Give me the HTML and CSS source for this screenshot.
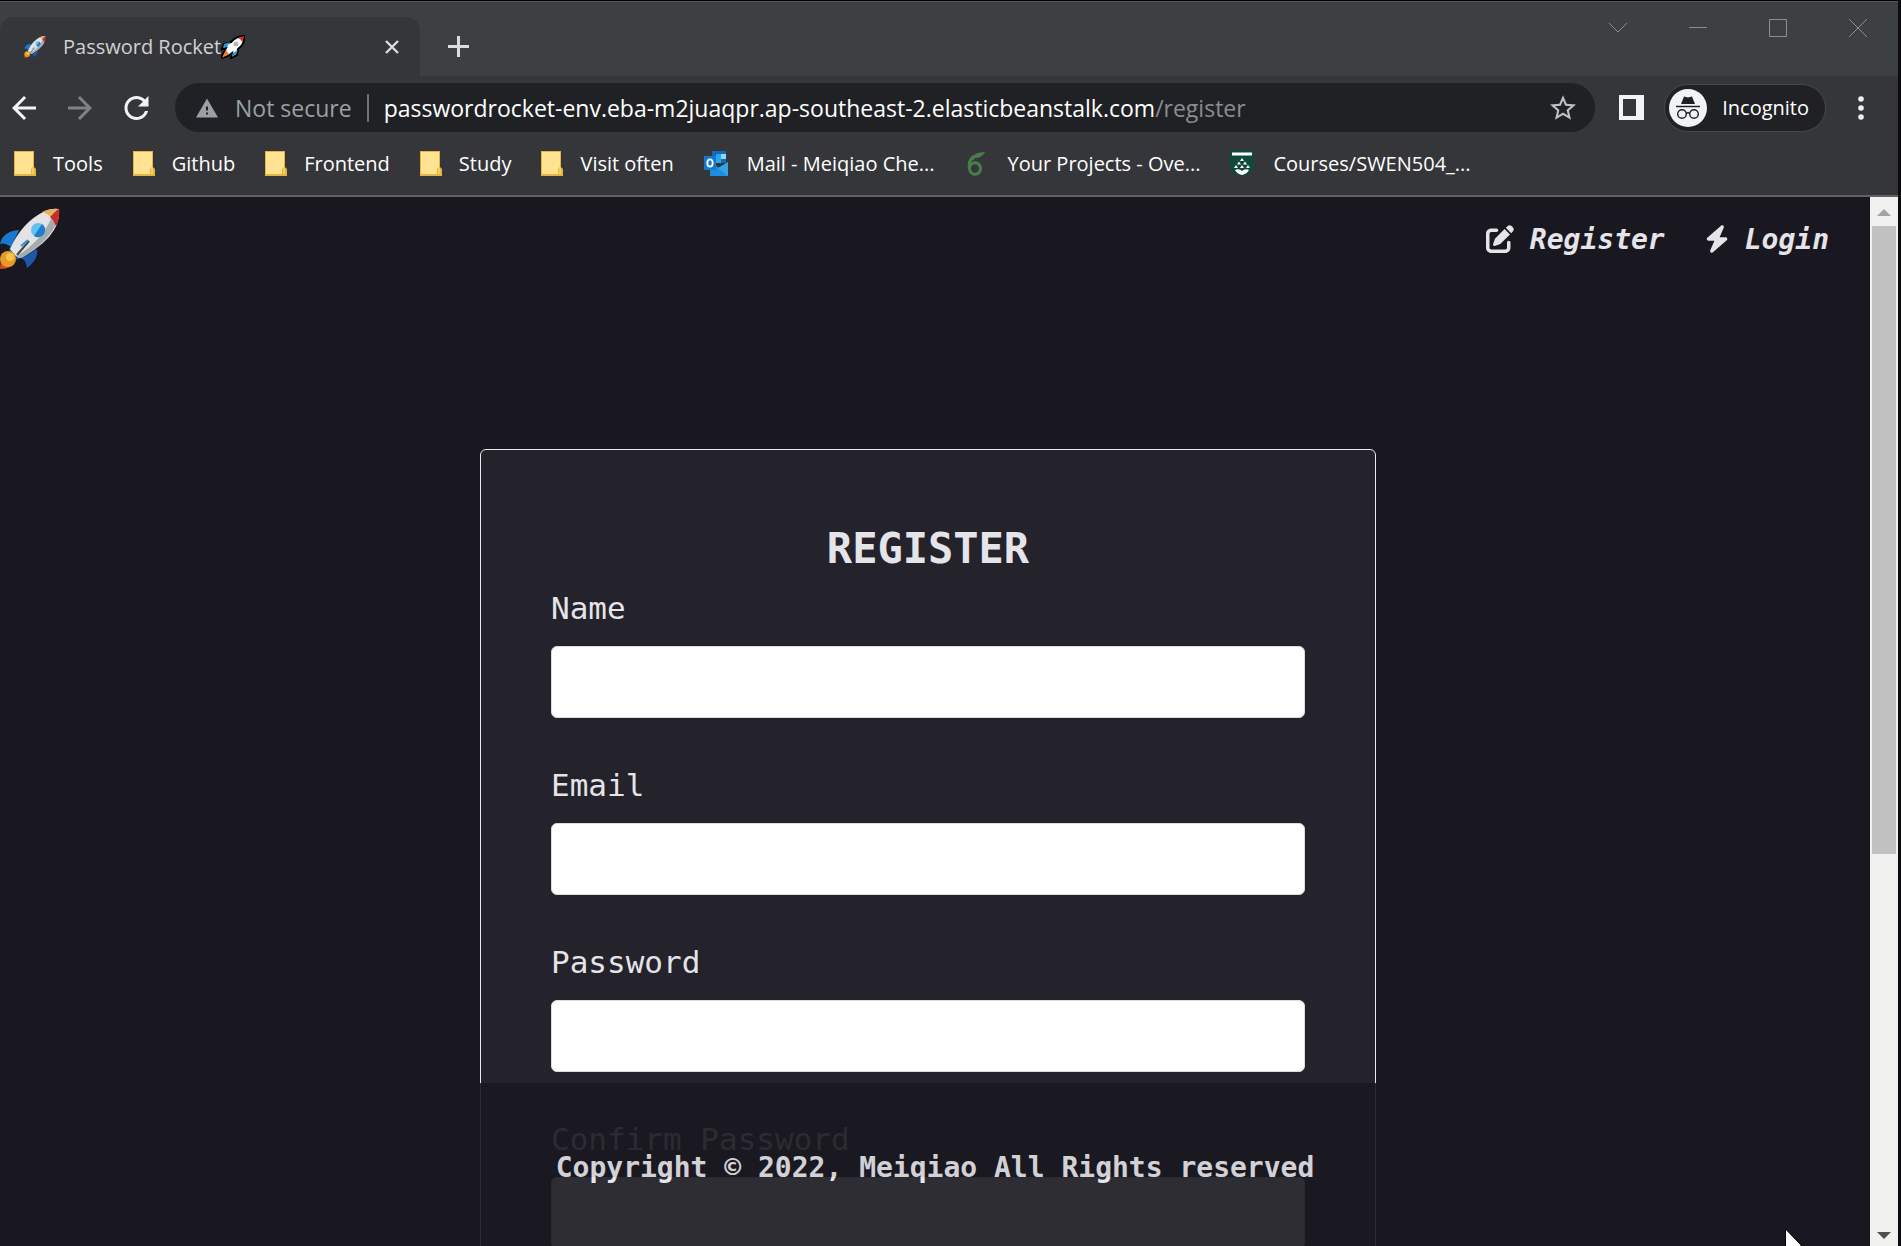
FILE: index.html
```html
<!DOCTYPE html>
<html lang="en">
<head>
<meta charset="utf-8">
<title>Password Rocket</title>
<link rel="stylesheet" href="styles.css">
</head>
<body>
<svg class="defs" aria-hidden="true">
  <symbol id="rocket" viewBox="0 0 60 62">
    <path d="M0 36C2 28 7 23 19 22L11 39Q5 34 0 36Z" fill="#1b78cf"/>
    <path d="M21 50L37 41Q39 51 27 60Q26 52 21 50Z" fill="#1c57a8"/>
    <path d="M10 38L22 49L17 52L9 43Z" fill="#1559a6"/>
    <path d="M45 3Q53 0 59 1Q60 12 54 22Q46 36 21 50Q17 50 13 45L10 41Q22 14 45 3Z" fill="#e3e3e6"/>
    <path d="M56 16Q48 34 21 50L17 48Q40 34 51 11Z" fill="#a6abad"/>
    <path d="M42 4Q51 0 58 1L51 9Q47 5 42 4Z" fill="#e8b35f"/>
    <path d="M58 1L50 9Q54 13 56 18Q60 10 59 2Z" fill="#c42e2c"/>
    <circle cx="38" cy="22" r="7" fill="#64c0ef"/>
    <path d="M42 16A7 7 0 0 1 34 28Z" fill="#1d80cd"/>
    <path d="M29 33L17 47" stroke="#3e454c" stroke-width="2"/>
    <path d="M28 32L21 38" stroke="#3694d8" stroke-width="2"/>
    <path d="M1 49L0 61Q12 61 15 54Z" fill="#da4a20"/>
    <circle cx="8" cy="51" r="8" fill="#e89a28"/>
    <circle cx="10" cy="49" r="4" fill="#f7c548"/>
  </symbol>
  <symbol id="folder" viewBox="0 0 22 25">
    <path d="M0 0H20V16L22 18V25H0Z" fill="#e4b545"/>
    <path d="M1 1H19V16L17 18V23H1Z" fill="#ffe391"/>
    <path d="M18 18Q18 16 20 17V23H18Z" fill="#f8ce5b"/>
  </symbol>
</svg>

<div class="window">
  <header class="chrome">
    <div class="tabstrip">
      <div class="tab">
        <svg class="favicon"><use href="#rocket"/></svg>
        <span class="tab-title">Password Rocket</span>
        <svg class="title-rocket" viewBox="0 0 24 24">
          <path d="M23 1Q15 1 10 7L3 9L1 14L5 13L3 17L0 23L7 21L11 18L10 23L16 20L17 14Q24 9 23 1Z" fill="#fff" stroke="#000" stroke-width="2"/>
          <path d="M9 7L3 9L2 13L6 12ZM12 18L11 22L15 19L17 15Z" fill="#1f9de0"/>
          <path d="M23 1L17 3Q20 4 21 7Q23 4 23 1Z" fill="#d62b2b"/>
          <path d="M5 15L1 23L8 19Z" fill="#f17f2d"/>
          <circle cx="15" cy="9" r="2.5" fill="#b5babd"/>
        </svg>
        <button class="tab-close" aria-label="Close tab"><svg width="14" height="14" viewBox="0 0 14 14"><path d="M1 1L13 13M13 1L1 13" stroke="#dadce0" stroke-width="2.4"/></svg></button>
      </div>
      <button class="new-tab" aria-label="New tab"><svg width="21" height="21" viewBox="0 0 21 21"><path d="M10.5 0V21M0 10.5H21" stroke="#dadce0" stroke-width="3"/></svg></button>
      <div class="window-buttons">
        <button aria-label="Search tabs"><svg width="18" height="18" viewBox="0 0 18 18"><path d="M0 4L9 13L18 4"/></svg></button>
        <button aria-label="Minimize"><svg width="18" height="18" viewBox="0 0 18 18"><path d="M0 8.5H18"/></svg></button>
        <button aria-label="Maximize"><svg width="18" height="18" viewBox="0 0 18 18"><path d="M.5.5H17.5V17.5H.5Z"/></svg></button>
        <button aria-label="Close window"><svg width="18" height="18" viewBox="0 0 18 18"><path d="M0 0L18 18M18 0L0 18"/></svg></button>
      </div>
    </div>

    <div class="toolbar">
      <button aria-label="Back"><svg width="24" height="24" viewBox="4 4 16 16"><path fill="#f1f3f4" d="M20 11H7.83l5.59-5.59L12 4l-8 8 8 8 1.41-1.41L7.83 13H20v-2z"/></svg></button>
      <button aria-label="Forward"><svg width="24" height="24" viewBox="4 4 16 16"><path fill="#7f8285" d="M4 13h12.17l-5.59 5.59L12 20l8-8-8-8-1.41 1.41L16.17 11H4v2z"/></svg></button>
      <button aria-label="Reload"><svg width="25" height="24" viewBox="4 4 16 16"><path fill="#f1f3f4" d="M17.65 6.35C16.2 4.9 14.21 4 12 4c-4.42 0-7.99 3.58-7.99 8s3.57 8 7.99 8c3.73 0 6.84-2.55 7.73-6h-2.08c-.82 2.33-3.04 4-5.65 4-3.31 0-6-2.69-6-6s2.69-6 6-6c1.66 0 3.14.69 4.22 1.78L13 11h7V4l-2.35 2.35z"/></svg></button>
      <div class="omnibox">
        <svg width="22" height="20" viewBox="1 2 22 19"><path fill="#9aa0a6" d="M1 21h22L12 2 1 21zm12-3h-2v-2h2v2zm0-4h-2v-4h2v4z"/></svg>
        <span class="not-secure">Not secure</span>
        <span class="divider"></span>
        <div class="url" role="textbox" aria-label="Address">passwordrocket-env.eba-m2juaqpr.ap-southeast-2.elasticbeanstalk.com<span class="url-path">/register</span></div>
        <button aria-label="Bookmark this page"><svg width="26" height="25" viewBox="2 2 20 19"><path fill="#bdc1c6" d="M22 9.24l-7.19-.62L12 2 9.19 8.63 2 9.24l5.46 4.73L5.82 21 12 17.27 18.18 21l-1.63-7.03L22 9.24zM12 15.4l-3.76 2.27 1-4.28-3.32-2.88 4.38-.38L12 6.1l1.71 4.04 4.38.38-3.32 2.88 1 4.28L12 15.4z"/></svg></button>
      </div>
      <button class="side-panel" aria-label="Side panel"><svg width="25" height="25" viewBox="0 0 25 25"><path fill="#f1f3f4" fill-rule="evenodd" d="M0 0H25V25H0ZM4 4V21H17V4Z"/></svg></button>
      <button class="incognito">
        <svg width="38" height="38" viewBox="0 0 38 38"><circle cx="19" cy="19" r="19" fill="#f1f3f4"/><path d="M12 15L15 7.5L19 8.5L23 7.5L26 15Z" fill="#202124"/><path d="M7 17.5H31" stroke="#202124" stroke-width="1.5"/><g fill="none" stroke="#202124" stroke-width="1.4"><circle cx="13" cy="25" r="4.3"/><circle cx="25" cy="25" r="4.3"/><path d="M17 24.5Q19 23 21 24.5"/></g></svg>
        Incognito
      </button>
      <button class="menu" aria-label="Menu"><svg width="6" height="24" viewBox="0 0 6 24" fill="#f1f3f4"><circle cx="3" cy="3" r="2.8"/><circle cx="3" cy="12" r="2.8"/><circle cx="3" cy="21" r="2.8"/></svg></button>
    </div>

    <nav class="bookmarks" aria-label="Bookmarks">
      <a href="#"><svg class="folder"><use href="#folder"/></svg>Tools</a>
      <a href="#"><svg class="folder"><use href="#folder"/></svg>Github</a>
      <a href="#"><svg class="folder"><use href="#folder"/></svg>Frontend</a>
      <a href="#"><svg class="folder"><use href="#folder"/></svg>Study</a>
      <a href="#"><svg class="folder"><use href="#folder"/></svg>Visit often</a>
      <a href="#" class="site"><svg width="24" height="25" viewBox="0 0 24 25"><path fill="#1469b8" d="M8 0H22V12H8Z"/><path fill="#28a8ea" d="M12 3H17V12H12Z"/><path fill="#8ed8fa" d="M17 3H22V8H17Z"/><path fill="#1b8fdd" d="M6 10L15 17L24 11V25H6Z"/><path fill="#2fa5e6" d="M24 11V25L14 17Z"/><path fill="#1478cf" d="M0 5H12V19H0Z"/><ellipse cx="6" cy="12" rx="2.7" ry="3.6" fill="none" stroke="#fff" stroke-width="1.8"/></svg>Mail - Meiqiao Che...</a>
      <a href="#" class="site"><svg width="24" height="25" viewBox="0 0 24 25"><g fill="none" stroke="#4a7d49" stroke-width="3"><ellipse cx="10" cy="17.5" rx="5.5" ry="5.8"/><path d="M4.5 18Q3 9 9 5"/></g><path fill="#4a7d49" d="M7 7Q9 1 20 1Q17 7 10 7L8 10Z"/></svg>Your Projects - Ove...</a>
      <a href="#" class="site"><svg width="24" height="27" viewBox="0 0 24 27"><path fill="#12483a" d="M0 0H24V18Q22 24 12 27Q2 24 0 18Z"/><path fill="#fff" d="M2 2.5H22V5.5H2ZM5 20Q9 18 12 21Q15 18 19 20Q17 24 12 25Q7 24 5 20ZM10 11L12 8L14 11ZM7 14.5L9 11.5L11 14.5ZM13 14.5L15 11.5L17 14.5ZM4 18L6 15L8 18ZM10 18L12 15L14 18ZM16 18L18 15L20 18Z"/></svg>Courses/SWEN504_...</a>
    </nav>
  </header>

  <div class="viewport">
    <div class="page">
      <div class="topbar">
        <a href="#" class="logo" aria-label="Home"><svg><use href="#rocket"/></svg></a>
        <nav class="site-nav" aria-label="Main">
          <a href="#"><svg width="28" height="28" viewBox="0 0 512 512" fill="currentColor"><path d="M471.6 21.7c-21.9-21.9-57.3-21.9-79.2 0L362.3 51.7l97.9 97.9 30.1-30.1c21.9-21.9 21.9-57.3 0-79.2L471.6 21.7zm-299.2 220c-6.1 6.1-10.8 13.6-13.5 21.9l-29.6 88.8c-2.9 8.6-.6 18.1 5.8 24.6s15.9 8.7 24.6 5.8l88.8-29.6c8.2-2.7 15.7-7.4 21.9-13.5L437.7 172.3 339.7 74.3 172.4 241.7zM96 64C43 64 0 107 0 160V416c0 53 43 96 96 96H352c53 0 96-43 96-96V320c0-17.7-14.3-32-32-32s-32 14.3-32 32v96c0 17.7-14.3 32-32 32H96c-17.7 0-32-14.3-32-32V160c0-17.7 14.3-32 32-32h96c17.7 0 32-14.3 32-32s-14.3-32-32-32H96z"/></svg>Register</a>
          <a href="#"><svg width="24" height="28" viewBox="0 0 448 512" fill="currentColor"><path d="M349.4 44.6c5.9-13.7 1.5-29.7-10.6-38.5s-28.6-8-39.9 1.8l-256 224c-10 8.8-13.6 22.9-8.9 35.3S50.7 288 64 288H175.5L98.6 467.4c-5.9 13.7-1.5 29.7 10.6 38.5s28.6 8 39.9-1.8l256-224c10-8.8 13.6-22.9 8.9-35.3s-16.6-20.7-30-20.7H272.5L349.4 44.6z"/></svg>Login</a>
        </nav>
      </div>

      <main class="content">
        <form class="card">
          <h1>REGISTER</h1>
          <div class="field"><label for="name">Name</label><input id="name" type="text"></div>
          <div class="field"><label for="email">Email</label><input id="email" type="email"></div>
          <div class="field"><label for="password">Password</label><input id="password" type="password"></div>
          <div class="field"><label for="confirm">Confirm Password</label><input id="confirm" type="password"></div>
        </form>
      </main>

      <footer class="footer">Copyright © 2022, Meiqiao All Rights reserved</footer>
      <svg class="cursor" width="16" height="17" viewBox="0 0 16 17"><path d="M.5 0L16 16V24H.5Z" fill="#fff" stroke="#000"/></svg>
    </div>
    <div class="scrollbar" aria-hidden="true">
      <svg width="14" height="8" viewBox="0 0 14 8"><path d="M0 7L7 0L14 7Z" fill="#a3a3a8"/></svg>
      <div class="track"><div class="thumb"></div></div>
      <svg width="14" height="8" viewBox="0 0 14 8"><path d="M0 0H14L7 7Z" fill="#505050"/></svg>
    </div>
  </div>
</div>
</body>
</html>
```
FILE: styles.css
```css
* { box-sizing: border-box; }

body {
  margin: 0;
  height: 100vh;
  overflow: hidden;
  background: #0c0c0e;
  font-family: "Open Sans", "Noto Sans", sans-serif;
}

button {
  display: flex;
  align-items: center;
  justify-content: center;
  padding: 0;
  border: 0;
  background: none;
  font: inherit;
  color: inherit;
}

svg { display: block; flex: none; }
a { color: inherit; text-decoration: none; }
.defs { position: absolute; width: 0; height: 0; }

.window {
  display: flex;
  flex-direction: column;
  height: 100vh;
  margin-right: 3px;
  border-top: 1px solid #000;
}

/* Browser frame */
.chrome {
  flex: none;
  background: #35363a;
  border-bottom: 2px solid #5f6164;
  color: #fff;
}

.tabstrip {
  display: flex;
  height: 75px;
  background: #3c4043;
  border-top: 1px solid #55565a;
}

.tab {
  display: flex;
  align-items: center;
  width: 420px;
  margin-top: 15px;
  padding: 0 21px 0 24px;
  background: #35363a;
  border-radius: 14px 14px 0 0;
  color: #cfd1d4;
  font-size: 20px;
}

.favicon { width: 22px; height: 22px; margin-right: 17px; }
.title-rocket { width: 24px; height: 24px; }
.tab-close { margin-left: auto; }
.new-tab { margin: 15px 0 0 28px; }

.window-buttons { display: flex; height: 52px; margin-left: auto; }
.window-buttons button { width: 80px; }
.window-buttons path { fill: none; stroke: #8c8e90; }

.toolbar {
  display: flex;
  align-items: center;
  gap: 32px;
  padding: 7px 34px 0 12px;
}

.omnibox {
  display: flex;
  flex: 1;
  align-items: center;
  height: 49px;
  margin: 0 -8px 0 -6px;
  padding: 0 19px 0 21px;
  border-radius: 25px;
  background: #202124;
  font-size: 23px;
  line-height: 30px;
  white-space: nowrap;
}

.not-secure { margin: 0 15px 0 17px; color: #9aa0a6; }
.divider { width: 2px; height: 28px; margin-right: 15px; background: #6f7275; }
.url { flex: 1; }
.url-path { color: #8a8d91; }

.incognito {
  gap: 15px;
  height: 48px;
  margin-left: -12px;
  padding: 0 16px 0 4px;
  border: 1px solid #46474b;
  border-radius: 24px;
  background: #202124;
  font-size: 20px;
}

.bookmarks {
  display: flex;
  gap: 30px;
  height: 63px;
  padding: 0 14px;
  font-size: 20px;
  white-space: nowrap;
}

.bookmarks a { display: flex; align-items: center; gap: 17px; }
.bookmarks .site { gap: 19px; }
.folder { width: 22px; height: 25px; }

/* Web page */
.viewport { display: flex; flex: 1; min-height: 0; }

.page {
  position: relative;
  flex: 1;
  min-width: 0;
  overflow: hidden;
  background: #19171f;
  color: #e5e4e9;
  font-family: "DejaVu Sans Mono", monospace;
}

.topbar {
  display: flex;
  align-items: center;
  justify-content: space-between;
  padding: 11px 41px 0 0;
}

.logo svg { width: 60px; height: 62px; }

.site-nav {
  display: flex;
  gap: 40px;
  font-size: 28px;
  font-style: italic;
  font-weight: 700;
}

.site-nav a { display: flex; align-items: center; gap: 16px; }

.content { padding: 179px 14px 0 0; }

.card {
  max-width: 896px;
  margin: 0 auto;
  padding: 72px 70px;
  border: 1px solid #e9e9ec;
  border-radius: 6px;
  background: #24222b;
}

.card h1 {
  margin: 0;
  font-size: 42px;
  line-height: 54px;
  text-align: center;
}

.field { margin-bottom: 35px; }

.field label {
  display: block;
  margin-bottom: 6px;
  font-size: 31px;
  line-height: 64px;
}

.field input {
  display: block;
  width: 100%;
  height: 72px;
  padding: 0 20px;
  border: 1px solid #dcdce0;
  border-radius: 6px;
  background: #fff;
  font: inherit;
  font-size: 31px;
}

.footer {
  position: absolute;
  right: 0;
  bottom: 0;
  left: 0;
  padding: 65px 0 58px;
  background: #19171f;
  font-size: 28px;
  font-weight: 700;
  line-height: 40px;
  text-align: center;
  opacity: 0.9;
}

.cursor { position: absolute; right: 69px; bottom: 0; }

.scrollbar {
  display: flex;
  flex: none;
  flex-direction: column;
  align-items: center;
  gap: 9px;
  width: 28px;
  padding: 12px 0 6px;
  background: #f1f1f0;
}

.track { flex: 1; width: 24px; }
.thumb { height: 63%; background: #c1c1c1; }
```
